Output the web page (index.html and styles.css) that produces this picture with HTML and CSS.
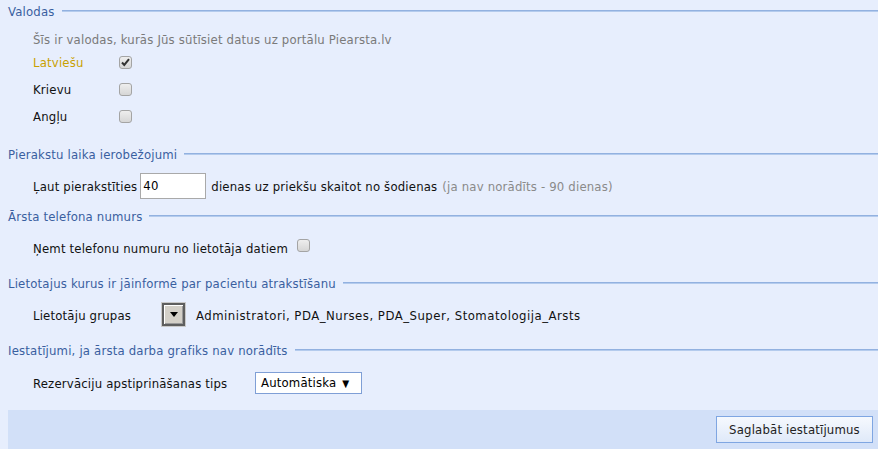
FILE: index.html
```html
<!DOCTYPE html>
<html>
<head>
<meta charset="utf-8">
<link rel="stylesheet" href="styles.css">
</head>
<body>
<div class="page">
  <div class="section s1">
    <div class="legend"><span class="legend-text">Valodas</span><span class="legend-line"></span></div>
    <div class="content">
      <div class="desc">Šīs ir valodas, kurās Jūs sūtīsiet datus uz portālu Piearsta.lv</div>
      <div class="lang-row"><span class="lang-label active">Latviešu</span><span class="cb checked"><svg viewBox="0 0 13 13" width="13" height="13"><path d="M3 6.5 L5.3 9 L10 3.2" fill="none" stroke="#333" stroke-width="2"/></svg></span></div>
      <div class="lang-row"><span class="lang-label">Krievu</span><span class="cb"></span></div>
      <div class="lang-row"><span class="lang-label">Angļu</span><span class="cb"></span></div>
    </div>
  </div>

  <div class="section s2">
    <div class="legend"><span class="legend-text">Pierakstu laika ierobežojumi</span><span class="legend-line"></span></div>
    <div class="content row r2">
      <span>Ļaut pierakstīties</span>
      <span class="input">40</span>
      <span>dienas uz priekšu skaitot no šodienas</span>
      <span class="hint">(ja nav norādīts - 90 dienas)</span>
    </div>
  </div>

  <div class="section s3">
    <div class="legend"><span class="legend-text">Ārsta telefona numurs</span><span class="legend-line"></span></div>
    <div class="content row r3">
      <span>Ņemt telefonu numuru no lietotāja datiem</span>
      <span class="cb"></span>
    </div>
  </div>

  <div class="section s4">
    <div class="legend"><span class="legend-text">Lietotajus kurus ir jāinformē par pacientu atrakstīšanu</span><span class="legend-line"></span></div>
    <div class="content row r4">
      <span class="lbl-groups">Lietotāju grupas</span>
      <span class="dd-btn"><span class="dd-tri"></span></span>
      <span class="groups">Administratori, PDA_Nurses, PDA_Super, Stomatologija_Arsts</span>
    </div>
  </div>

  <div class="section s5">
    <div class="legend"><span class="legend-text">Iestatījumi, ja ārsta darba grafiks nav norādīts</span><span class="legend-line"></span></div>
    <div class="content row r5">
      <span class="lbl-rez">Rezervāciju apstiprināšanas tips</span>
      <span class="select">Automātiska <span class="sel-arrow">▼</span></span>
    </div>
  </div>

  <div class="footer">
    <button class="save">Saglabāt iestatījumus</button>
  </div>
</div>
</body>
</html>
```

FILE: styles.css
```css
html, body {
  margin: 0;
  padding: 0;
  background: #e7eefd;
}
body {
  font-family: "DejaVu Sans Condensed", "DejaVu Sans", sans-serif;
  font-size: 13px;
  letter-spacing: 0.18px;
  color: #111;
  width: 878px;
  height: 449px;
  overflow: hidden;
}
.page {
  margin-left: 8px;
  padding-top: 2px;
}
.legend {
  display: flex;
  align-items: center;
  height: 20px;
  line-height: 20px;
  gap: 7px;
}
.legend-text {
  color: #3a5fa0;
  white-space: nowrap;
}
.legend-line {
  flex: 1;
  height: 0;
  border-top: 1px solid #92b1e0;
  border-bottom: 1px solid #b4cbed;
  margin-top: -3px;
}
.content {
  padding-left: 25px;
}
.desc {
  margin-top: 9px;
  height: 18px;
  line-height: 18px;
  color: #7a7a7a;
}
.lang-row {
  display: flex;
  align-items: center;
  height: 27px;
}
.lang-label {
  width: 86px;
}
.lang-label.active {
  color: #c9a100;
}
.cb {
  display: inline-block;
  box-sizing: border-box;
  width: 13px;
  height: 13px;
  border: 1px solid #a4a4a4;
  border-radius: 3px;
  background: linear-gradient(#eeeeee, #d6d6d6);
}
.cb svg {
  display: block;
  margin: -1px;
}
.section.s2 { margin-top: 15px; }
.section.s3 { margin-top: 8px; }
.section.s4 { margin-top: 13px; }
.section.s5 { margin-top: 13px; }
.row {
  display: flex;
  align-items: center;
  height: 26px;
  margin-top: 8px;
  white-space: nowrap;
}
.r2 span + span { margin-left: 5px; }
.r2 .input { margin-left: 3px; }
.input {
  box-sizing: border-box;
  width: 66px;
  height: 26px;
  line-height: 24px;
  background: #fff;
  border: 1px solid #a9a9a9;
  padding-left: 2px;
  color: #000;
}
.hint {
  color: #8a8a8a;
}
.r3 .cb { margin-left: 9px; margin-top: -6px; }
.lbl-groups { width: 129px; }
.dd-btn {
  box-sizing: border-box;
  width: 23px;
  height: 23px;
  border: 2px solid #5e5e5e;
  outline: 1px solid #c9c9c9;
  background: #d4d0c8;
  box-shadow: inset 1px 1px 0 #fff, inset -1px -1px 0 #9a9a9a;
  display: flex;
  align-items: center;
  justify-content: center;
  margin-top: -2px;
}
.dd-tri {
  width: 0;
  height: 0;
  border-left: 4px solid transparent;
  border-right: 4px solid transparent;
  border-top: 5px solid #000;
  margin-top: 1px;
}
.groups { margin-left: 11px; letter-spacing: 0.5px; }
.r5 { margin-top: 9px; }
.lbl-rez { width: 222px; }
.select {
  box-sizing: border-box;
  width: 107px;
  height: 22px;
  line-height: 20px;
  background: #fff;
  border: 1px solid #7f9fd6;
  padding-left: 5px;
  color: #000;
}
.sel-arrow { font-size: 10px; margin-left: 2px; }
.footer {
  margin-top: 14px;
  height: 39px;
  background: #d2e0f8;
  display: flex;
  justify-content: flex-end;
  align-items: flex-start;
}
.save {
  margin-top: 6px;
  margin-right: 5px;
  width: 157px;
  height: 27px;
  font-family: inherit;
  font-size: 13px;
  letter-spacing: 0.18px;
  color: #222;
  border: 1px solid #7fa6e2;
  background: linear-gradient(#f6f9fe, #dfe9f9);
  padding: 0;
}
```
